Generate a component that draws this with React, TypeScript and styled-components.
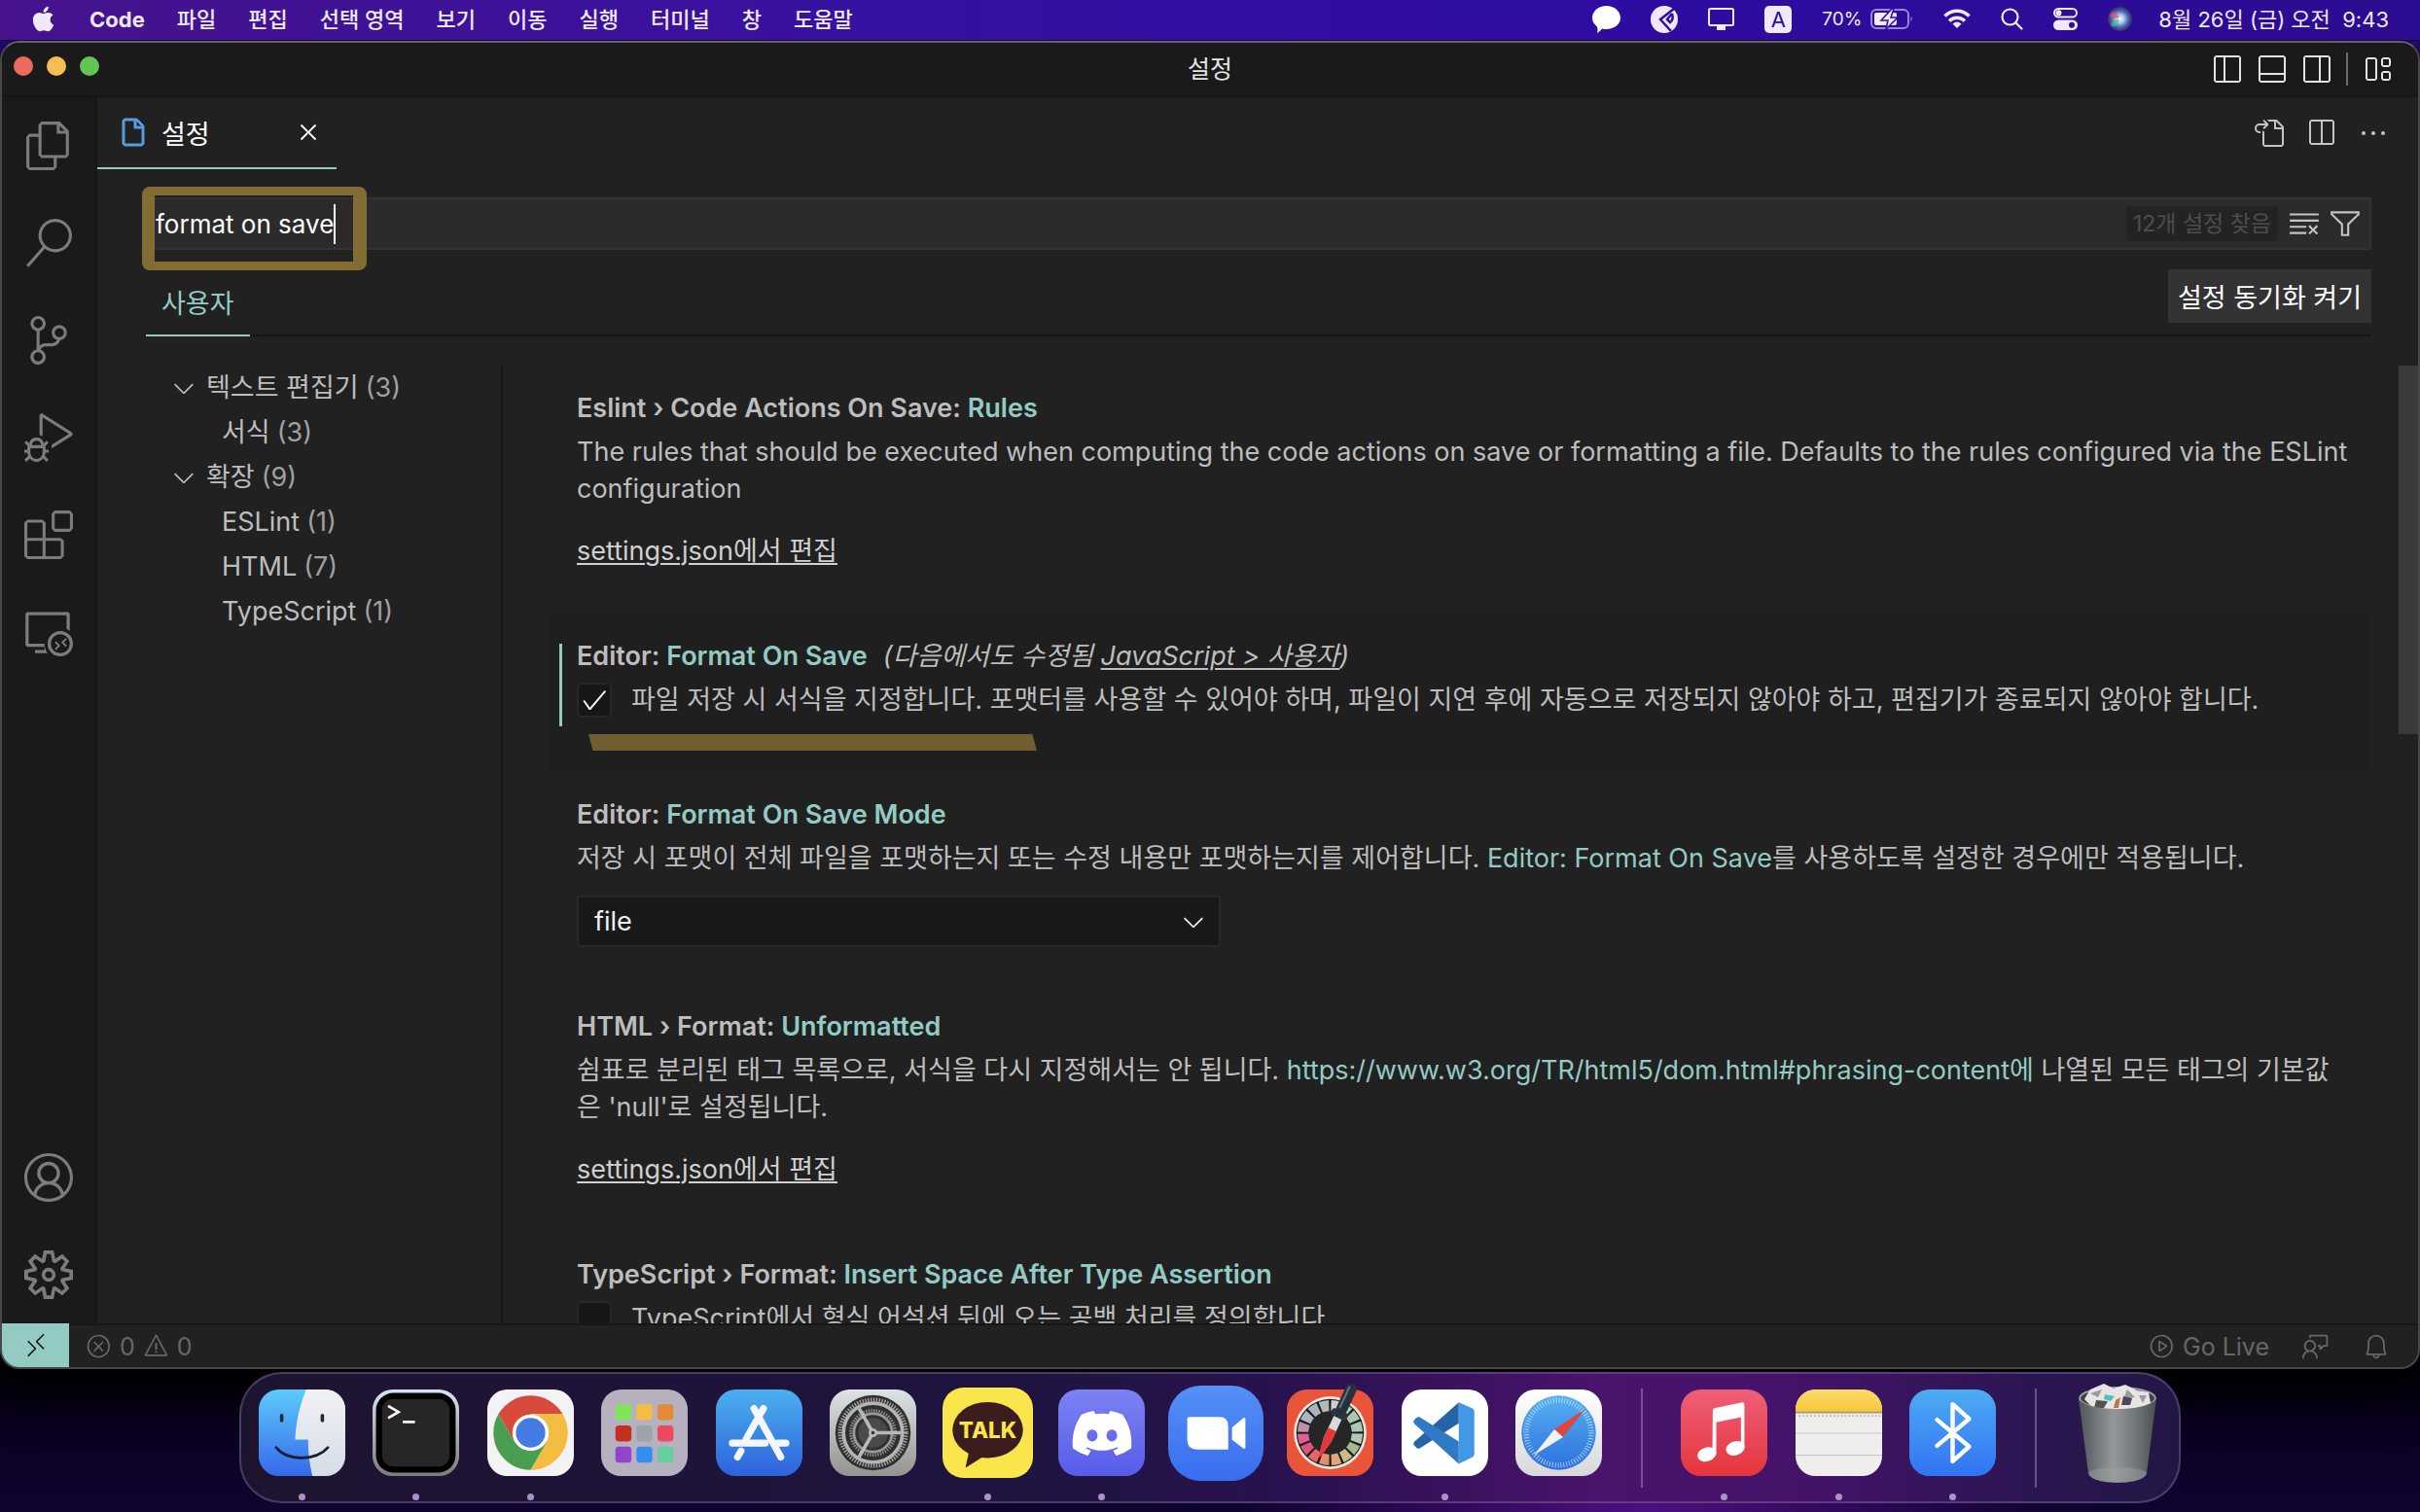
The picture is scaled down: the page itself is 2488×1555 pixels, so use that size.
import React, { useState } from 'react';
import styled, { createGlobalStyle, css } from 'styled-components';
import {
  VscFiles, VscSearch, VscSourceControl, VscDebugAlt, VscExtensions, VscRemoteExplorer, VscAccount,
  VscSettingsGear, VscGoToFile, VscSplitHorizontal, VscEllipsis, VscClearAll, VscFilter, VscError,
  VscWarning, VscFeedback, VscBell, VscRemote, VscLayoutSidebarLeftOff, VscLayoutPanelOff,
  VscLayoutSidebarRightOff, VscLayout, VscClose, VscFile, VscCheck, VscChevronDown, VscPlayCircle,
} from 'react-icons/vsc';
import { FaApple, FaDiscord } from 'react-icons/fa';

const accent = '#93cbc4';
const line = '#161616';
const font = `Inter, "Noto Sans CJK KR", sans-serif`;

const GlobalStyle = createGlobalStyle`
  * { box-sizing: border-box; }
  html, body { margin: 0; height: 100%; }
  body { background: #0e0328; font-family: ${font}; }
  button, input, select { font: inherit; color: inherit; margin: 0; }
  ul { list-style: none; margin: 0; padding: 0; }
  p, h1, h2 { margin: 0; font-weight: 400; }
  svg { display: block; flex: none; }
`;

const Desktop = styled.div`
  height: 100vh;
  min-height: 900px;
  display: flex;
  flex-direction: column;
  overflow: hidden;
  font-size: 27px;
  background:
    radial-gradient(ellipse 420px 190px at 68% 100%, #4d0f80 0%, rgba(77, 15, 128, 0) 100%),
    linear-gradient(to bottom, #2f0b96 0, #2f0b96 60px, #04000c 1400px, #0d0228 1500px, #0f0330 100%);
`;

/* ---------- menu bar ---------- */

const MenuBar = styled.header`
  position: relative;
  z-index: 1;
  flex: none;
  height: 42px;
  padding: 0 32px 2px 30px;
  display: flex;
  align-items: center;
  justify-content: space-between;
  color: #efe9fb;
  font-size: 22px;
  line-height: 40px;
  background: linear-gradient(to right, #46138d 0%, #3611a0 36%, #2f0ca2 65%, #2b0c90 100%);
  border-bottom: 1px solid #170a3a;
`;

const MenuGroup = styled.nav`
  display: flex;
  align-items: center;
  gap: 33px;
`;

const MenuButton = styled.button<{ $bold?: boolean }>`
  border: 0;
  padding: 0;
  background: none;
  font-weight: ${(p) => (p.$bold ? 700 : 500)};
  line-height: 38px;
  white-space: nowrap;
`;

const StatusGroup = styled.div`
  display: flex;
  align-items: center;
  gap: 31px;
`;

const Battery = styled.span`
  display: flex;
  align-items: center;
  gap: 9px;
  font-size: 19px;
`;

const InputSource = styled.span`
  width: 28px;
  height: 28px;
  border-radius: 5px;
  background: #efe9fb;
  color: #2f0ca2;
  font-size: 22px;
  line-height: 28px;
  text-align: center;
`;

const Clock = styled.time`
  margin-left: -4px;
  white-space: pre;
`;

/* ---------- window ---------- */

const Window = styled.main`
  flex: 1;
  min-height: 0;
  display: flex;
  flex-direction: column;
  overflow: hidden;
  border: 2px solid #474747;
  border-top-color: #646464;
  border-radius: 20px;
  background: #212121;
  color: #bdbdbd;
  box-shadow: 0 14px 50px 10px #000;
`;

const TitleBar = styled.div`
  flex: none;
  height: 56px;
  padding: 0 12px;
  display: grid;
  grid-template-columns: 1fr auto 1fr;
  align-items: center;
  background: #1a1a1a;
  border-bottom: 2px solid ${line};
`;

const TitleText = styled.h1`
  color: #e4e4e4;
  font-size: 25px;
  line-height: 40px;
`;

const Lights = styled.div`
  display: flex;
  gap: 14px;
  padding-bottom: 6px;
`;

const Light = styled.button<{ $color: string }>`
  width: 20px;
  height: 20px;
  padding: 0;
  border: 0;
  border-radius: 50%;
  background: ${(p) => p.$color};
`;

const TitleActions = styled.div`
  display: flex;
  justify-content: flex-end;
  align-items: center;
  gap: 14px;
  padding-right: 14px;
  color: #e4e4e4;
`;

const Divider = styled.span`
  width: 2px;
  height: 34px;
  background: #6a6a6a;
`;

const IconButton = styled.button`
  display: grid;
  place-items: center;
  border: 0;
  padding: 0;
  background: none;
`;

const Body = styled.div`
  flex: 1;
  min-height: 0;
  display: flex;
`;

const ActivityBar = styled.nav`
  flex: none;
  width: 98px;
  display: flex;
  flex-direction: column;
  background: #1a1a1a;
  border-right: 2px solid ${line};
  color: #7a7d7d;
`;

const ActivityButton = styled.button`
  height: 100px;
  display: grid;
  place-items: center;
  border: 0;
  padding: 0;
  background: none;
`;

const Spacer = styled.div`
  flex: 1;
`;

const Editor = styled.section`
  flex: 1;
  min-width: 0;
  display: flex;
  flex-direction: column;
`;

const TabStrip = styled.div`
  flex: none;
  height: 74px;
  display: flex;
  justify-content: space-between;
  padding-right: 30px;
`;

const Tab = styled.div`
  width: 246px;
  padding: 0 14px 0 20px;
  display: flex;
  align-items: center;
  border-bottom: 2px solid ${accent};
  color: #fff;
`;

const TabName = styled.span`
  flex: 1;
  padding-left: 14px;
`;

const TabActions = styled.div`
  display: flex;
  align-items: center;
  gap: 22px;
  color: #c4c4c4;
`;

const SearchHeader = styled.div`
  flex: none;
  padding: 29px 48px 0 50px;
`;

const SearchBox = styled.div`
  position: relative;
  height: 54px;
  padding: 0 8px;
  display: flex;
  align-items: center;
  background: #2b2b2b;
  border: 2px solid #333;
  color: #fff;
  font-size: 26px;
`;

const SearchInput = styled.input`
  field-sizing: content;
  border: 0;
  outline: 0;
  padding: 0;
  background: none;
  caret-color: transparent;
`;

const Caret = styled.span`
  width: 2px;
  height: 41px;
  background: #fff;
`;

const MarkerFrame = styled.span`
  position: absolute;
  left: -6px;
  top: -13px;
  width: 231px;
  height: 86px;
  border: 9px solid rgba(146, 122, 54, 0.85);
  border-left-width: 13px;
  border-right-width: 14px;
  border-radius: 8px;
  pointer-events: none;
`;

const CountBadge = styled.span`
  height: 36px;
  padding: 0 7px;
  border-radius: 4px;
  background: #232323;
  color: #4d4d4d;
  font-size: 23px;
  line-height: 36px;
`;

const SearchActions = styled.div`
  margin-left: 10px;
  display: flex;
  gap: 8px;
  color: #c4c4c4;
`;

const ScopeRow = styled.div`
  height: 89px;
  display: flex;
  align-items: stretch;
  justify-content: space-between;
  border-bottom: 2px solid ${line};
`;

const ScopeTab = styled.button`
  margin-bottom: -2px;
  padding: 20px 16px 0;
  border: 0;
  border-bottom: 2px solid ${accent};
  background: none;
  color: ${accent};
`;

const SyncButton = styled.button`
  align-self: flex-end;
  height: 55px;
  margin-bottom: 12px;
  padding: 0 10px;
  border: 0;
  background: #333;
  color: #fff;
`;

const SettingsBody = styled.div`
  flex: 1;
  min-height: 0;
  margin-top: 30px;
  padding-left: 50px;
  display: flex;
  overflow: hidden;
`;

const Toc = styled.nav`
  flex: none;
  width: 367px;
  border-right: 2px solid ${line};
`;

const TocItem = styled.li<{ $level: number }>`
  height: 46px;
  padding-left: ${(p) => (p.$level ? 78 : 23)}px;
  display: flex;
  align-items: center;
  gap: 7px;
  line-height: 46px;
  white-space: nowrap;
`;

const TocCount = styled.span`
  color: #a0a0a0;
`;

const Settings = styled.div`
  flex: 1;
  min-width: 0;
  height: 100%;
  padding: 0 0 0 48px;
  overflow: hidden;
`;

const Row = styled.article<{ $focused?: boolean }>`
  padding: 24px 21px 38px 28px;
  position: relative;
  ${(p) => p.$focused && css`background: #1f1f1f;`}
`;

const ModifiedBar = styled.span`
  position: absolute;
  left: 10px;
  top: 31px;
  width: 3px;
  height: 85px;
  background: ${accent};
`;

const RowTitle = styled.h2`
  font-size: 27px;
  font-weight: 600;
  line-height: 40px;
  margin-bottom: 6px;

  strong { color: ${accent}; font-weight: 600; }
`;

const Scope = styled.em`
  margin-left: 16px;
  font-weight: 400;
`;

const Description = styled.p`
  line-height: 38px;
`;

const TextLink = styled.a<{ $plain?: boolean }>`
  color: ${(p) => (p.$plain ? accent : 'inherit')};
  text-decoration: ${(p) => (p.$plain ? 'none' : 'underline')};
  text-decoration-thickness: 2px;
  text-underline-offset: 3px;
`;

const LinkRow = styled.p`
  padding: 26px 0 7px;
  line-height: 38px;
  color: #d0d0d0;
`;

const CheckRow = styled.label`
  display: flex;
  align-items: center;
  gap: 20px;
  height: 38px;
  margin-bottom: 17px;
  line-height: 38px;
  white-space: nowrap;
`;

const CheckHolder = styled.span`
  position: relative;
  width: 36px;
  height: 36px;
  color: #fff;

  svg { position: absolute; left: 3px; top: 3px; pointer-events: none; }
`;

const CheckBox = styled.input`
  appearance: none;
  display: block;
  width: 36px;
  height: 36px;
  border: 2px solid #272727;
  border-radius: 6px;
  background: #171717;
`;

const MarkerLine = styled.span`
  position: absolute;
  left: 40px;
  top: 124px;
  width: 461px;
  height: 17px;
  background: #6e5e31;
  clip-path: polygon(0 0, 99% 0, 100% 100%, 1% 100%);
`;

const SelectHolder = styled.div`
  position: relative;
  width: 662px;
  margin-top: 19px;
  color: #f0f0f0;

  svg { position: absolute; right: 12px; top: 11px; pointer-events: none; }
`;

const Select = styled.select`
  appearance: none;
  display: block;
  width: 100%;
  height: 53px;
  padding: 0 16px;
  border: 2px solid #272727;
  border-radius: 0;
  background: #191919;
`;

const ScrollTrack = styled.div`
  flex: none;
  width: 20px;
  margin-left: 29px;
`;

const ScrollThumb = styled.div`
  height: 379px;
  background: #3a3b3a;
`;

const StatusBar = styled.footer`
  flex: none;
  height: 45px;
  padding-right: 29px;
  display: flex;
  align-items: center;
  border-top: 2px solid ${line};
  color: #676767;
  font-size: 25px;
`;

const RemoteButton = styled.button`
  align-self: stretch;
  width: 69px;
  margin-top: -2px;
  display: grid;
  place-items: center;
  border: 0;
  padding: 0;
  background: ${accent};
  color: #111;
`;

const StatusItem = styled.button<{ $left: number }>`
  display: flex;
  align-items: center;
  gap: 8px;
  margin-left: ${(p) => p.$left}px;
  padding: 0;
  border: 0;
  background: none;
`;

/* ---------- dock ---------- */

const Dock = styled.nav`
  flex: none;
  align-self: center;
  width: min(1996px, 100%);
  height: 135px;
  margin: 3px 0 9px;
  padding: 0 18px;
  display: flex;
  align-items: center;
  justify-content: space-between;
  border: 2px solid rgba(140, 120, 170, 0.4);
  border-radius: 44px;
  background: linear-gradient(to right, #1e132f 0%, #1f1440 40%, #2a1250 55%, #4a136c 70%, #45136a 80%, #2c1652 92%, #231645 100%);
`;

const DockItem = styled.button<{ $running?: boolean }>`
  position: relative;
  width: 89px;
  height: 89px;
  padding: 0;
  border: 0;
  margin-bottom: 10px;
  display: flex;
  align-items: center;
  justify-content: center;
  background: none;

  &::after {
    content: '';
    display: ${(p) => (p.$running ? 'block' : 'none')};
    position: absolute;
    left: 41px;
    bottom: -25px;
    width: 7px;
    height: 7px;
    border-radius: 50%;
    background: #ab92ca;
  }
`;

const DockDivider = styled.span`
  width: 2px;
  height: 102px;
  margin: 0 11px;
  background: rgba(190, 150, 220, 0.45);
`;

/* ---------- drawings ---------- */

const Tile = ({ fill }: { fill: string }) => <rect width="100" height="100" rx="23" fill={fill} />;

const Gradient = ({ id, from, to }: { id: string; from: string; to: string }) => (
  <linearGradient id={id} x1="0" y1="0" x2="0" y2="1">
    <stop offset="0" stopColor={from} />
    <stop offset="1" stopColor={to} />
  </linearGradient>
);

const Art = ({ size = 89, children }: { size?: number; children: React.ReactNode }) => (
  <svg width={size} height={size} viewBox="0 0 100 100" overflow="visible" fill="none">{children}</svg>
);

const Finder = () => (
  <Art>
    <defs>
      <Gradient id="fi1" from="#5ecbfa" to="#3568ec" />
      <Gradient id="fi2" from="#f1f1f5" to="#d4dce6" />
      <clipPath id="fic"><rect width="100" height="100" rx="23" /></clipPath>
    </defs>
    <g clipPath="url(#fic)">
      <rect width="100" height="100" fill="url(#fi1)" />
      <path d="M55 0C48 16 43 36 42 58H57C57 74 59 88 62 100H100V0Z" fill="url(#fi2)" />
    </g>
    <path d="M26.500 30V36M73.500 30V36" stroke="#1d2a3a" strokeWidth="4" strokeLinecap="round" />
    <path d="M20 67C33 83 66 83 80 67" stroke="#14202e" strokeWidth="3" strokeLinecap="round" />
  </Art>
);

const Terminal = () => (
  <Art>
    <defs><Gradient id="te" from="#d5e4ee" to="#7d7b7b" /></defs>
    <Tile fill="url(#te)" />
    <rect x="4" y="4" width="92" height="92" rx="20" fill="#000" />
    <rect x="11" y="11" width="78" height="78" rx="13" fill="#262626" />
    <path d="M18 19L30 26L18 33M35 37.500H49" stroke="#fff" strokeWidth="3" />
  </Art>
);

const Chrome = () => (
  <Art>
    <Tile fill="#f3f3f5" />
    <path d="M12.800 28.500A43 43 0 0 1 87.200 28.500H50L31.400 60.750Z" fill="#d84b3c" />
    <path d="M87.200 28.500A43 43 0 0 1 50 93L68.600 60.750L50 28.500Z" fill="#f3bd42" />
    <path d="M12.800 28.500A43 43 0 0 0 50 93L68.600 60.750H31.400Z" fill="#4a9e51" />
    <circle cx="50" cy="50" r="21" fill="#fff" />
    <circle cx="50" cy="50" r="17" fill="#447ce4" />
  </Art>
);

const padColors = ['#80e35c', '#f3bd45', '#e58a38', '#c4301f', '#9da3a6', '#e94a60', '#9543cb', '#3190f2', '#69cda2'];
const Launchpad = () => (
  <Art>
    <Tile fill="#b6b1bf" />
    {padColors.map((color, i) => (
      <rect key={color} x={16.5 + (i % 3) * 24.3} y={17 + Math.floor(i / 3) * 24.5} width="18.500" height="18.500" rx="4" fill={color} />
    ))}
  </Art>
);

const AppStore = () => (
  <Art>
    <defs><Gradient id="as" from="#4ab0ee" to="#2e62dc" /></defs>
    <Tile fill="url(#as)" />
    <g stroke="#f4f8fd" strokeWidth="8" strokeLinecap="round">
      <path d="M19 62H57M71 62H81M44 22L75 78M29 71L25 78" />
      <path d="M55 22L35 57" />
    </g>
  </Art>
);

const Preferences = () => (
  <Art>
    <defs><Gradient id="pr" from="#dde3e6" to="#93938f" /></defs>
    <Tile fill="url(#pr)" />
    <circle cx="50" cy="50" r="43.500" fill="#303030" />
    <circle cx="50" cy="50" r="38" stroke="#a2a2a2" strokeWidth="5" strokeDasharray="1.600 1.600" />
    <circle cx="50" cy="50" r="34" stroke="#b4b6b6" strokeWidth="4" />
    <circle cx="50" cy="50" r="25.500" stroke="#8b8b8b" strokeWidth="4" strokeDasharray="1.600 1.400" />
    <circle cx="50" cy="50" r="22" stroke="#9b9b9b" strokeWidth="3" />
    <circle cx="50" cy="50" r="17" fill="#4a4a4a" />
    <path d="M50 50H82M50 50L34 22M50 50L34 78" stroke="#b8baba" strokeWidth="4" />
    <circle cx="50" cy="50" r="5" fill="#b8baba" />
    <circle cx="50" cy="50" r="2" fill="#303030" />
  </Art>
);

const TalkText = styled.text`
  font: 800 24px ${font};
  fill: #fae54c;
`;

const Talk = () => (
  <Art size={93}>
    <Tile fill="#fae54c" />
    <ellipse cx="50" cy="47" rx="39" ry="31" fill="#3a1d1c" />
    <path d="M30 70L26 88L48 74Z" fill="#3a1d1c" stroke="#3a1d1c" strokeWidth="1" />
    <TalkText x="50" y="56" textAnchor="middle">TALK</TalkText>
  </Art>
);

const DiscordTile = styled.span`
  width: 89px;
  height: 89px;
  display: grid;
  place-items: center;
  border-radius: 20px;
  background: linear-gradient(#7c82f2, #575cea);
  color: #fff;
`;

const Discord = () => (
  <DiscordTile><FaDiscord size={66} /></DiscordTile>
);

const Zoom = () => (
  <Art size={98}>
    <defs><Gradient id="zo" from="#5490f6" to="#386df0" /></defs>
    <rect width="100" height="100" rx="34" fill="url(#zo)" />
    <path d="M22 33H54Q63 33 63 43V67H30Q20 67 20 57V36Q20 33 22 33Z" fill="#fff" />
    <path d="M67 44L79 34Q81 33 81 35V65Q81 67 79 66L67 57Z" fill="#fff" />
  </Art>
);

const dial = ['#cfd0c8', '#c0cdbd', '#adc6b4', '#a9c9b4', '#b2c8b0', '#a7b98d', '#c9b98c', '#e0a878', '#e58d70', '#e3666a', '#e0527c', '#df5f98', '#c58cab', '#aeb4c4', '#aab4bd', '#b4bab8'];
const Picker = () => (
  <Art>
    <Tile fill="#ea5539" />
    <circle cx="50" cy="50" r="42" fill="#e9e6e2" />
    <circle cx="50" cy="50" r="39" fill="#1c1c1c" />
    {dial.map((color, i) => (
      <path key={i} d="M44 12.800A37.500 37.500 0 0 1 56 12.800L53.800 25.500H46.200Z" fill={color} transform={`rotate(${i * 22.5 + 11} 50 50)`} />
    ))}
    <circle cx="50" cy="50" r="25" fill="#262626" />
    <g transform="rotate(25 60 30)">
      <path d="M55 32H65V60L61 82H59L55 60Z" fill="#d9d9d9" />
      <path d="M55 48H65V62L61 83H59L55 62Z" fill="#e2383a" />
      <rect x="50" y="24" width="20" height="9" rx="4" fill="#2b3542" />
      <rect x="53.500" y="-10" width="13" height="38" rx="6" fill="#27303d" />
      <rect x="56" y="-6" width="2.500" height="28" rx="1" fill="#5f6c7d" />
    </g>
  </Art>
);

const Code = () => (
  <Art>
    <Tile fill="#fff" />
    <path d="M66 15V39L21 68Q19 69 17 67L14 64Q13 62 15 60Z" fill="#2764a7" />
    <path d="M66 86V60L21 32Q19 31 17 33L14 36Q13 38 15 40Z" fill="#2f7ac6" />
    <path d="M66 15L82 22Q84 23 84 26V74Q84 77 82 78L66 86Z" fill="#4398e6" />
  </Art>
);

const Safari = () => (
  <Art>
    <defs>
      <Gradient id="sa1" from="#fff" to="#d8d8da" />
      <Gradient id="sa2" from="#55b2f1" to="#2d6fdd" />
    </defs>
    <Tile fill="url(#sa1)" />
    <circle cx="50" cy="50" r="43" fill="url(#sa2)" />
    <circle cx="50" cy="50" r="37.500" stroke="#d5e8fa" strokeWidth="6" strokeDasharray="0.800 2.472" />
    <path d="M80 23L55 55L45 46Z" fill="#e0453f" />
    <path d="M21 76L45 46L55 55Z" fill="#f3f3f3" />
  </Art>
);

const Music = () => (
  <Art>
    <defs><Gradient id="mu" from="#ee5f78" to="#e6353c" /></defs>
    <Tile fill="url(#mu)" />
    <path d="M37 24Q37 22 39 21.500L71 15Q73.500 15 73.500 17V68H69.500V32L41 38V75H36.500Z" fill="#fff" />
    <ellipse cx="30" cy="75" rx="11" ry="8" transform="rotate(-18 30 75)" fill="#fff" />
    <ellipse cx="63" cy="68" rx="11" ry="8" transform="rotate(-18 63 68)" fill="#fff" />
  </Art>
);

const Notes = () => (
  <Art>
    <defs>
      <Gradient id="no" from="#fbdc6a" to="#f6c53a" />
      <clipPath id="noc"><rect width="100" height="100" rx="23" /></clipPath>
    </defs>
    <g clipPath="url(#noc)">
      <rect width="100" height="100" fill="#efeeec" />
      <rect width="100" height="26" fill="url(#no)" />
      <rect y="25.500" width="100" height="2" fill="#a7996e" />
      <path d="M4 30.500H98" stroke="#b5b4b0" strokeWidth="2" strokeDasharray="2 2.400" />
      <path d="M0 50.500H100M0 76H100" stroke="#c9c8c5" strokeWidth="1.200" />
    </g>
  </Art>
);

const Bluetooth = () => (
  <Art>
    <defs><Gradient id="bt" from="#4dacf2" to="#3173f3" /></defs>
    <Tile fill="url(#bt)" />
    <path d="M32 35L69 66L50 83V17L69 34L32 65" stroke="#fff" strokeWidth="5" strokeLinecap="round" strokeLinejoin="round" />
  </Art>
);

const Trash = () => (
  <svg width="80" height="102" viewBox="0 0 80 102" fill="none">
    <defs>
      <linearGradient id="tr" x1="0" y1="0" x2="1" y2="0">
        <stop offset="0" stopColor="#4f5558" />
        <stop offset="0.450" stopColor="#94989a" />
        <stop offset="0.750" stopColor="#6f7477" />
        <stop offset="1" stopColor="#4a4f52" />
      </linearGradient>
    </defs>
    <ellipse cx="40" cy="15" rx="39" ry="11" fill="#3d4144" stroke="#9b9fa1" strokeWidth="2" />
    <path d="M6 16L12 6L26 0L36 5L48 1L60 7L72 9L74 20L60 26H16Z" fill="#e6e5e3" />
    <path d="M12 10L24 6L20 14ZM50 6L58 14L46 16ZM62 12L70 12L66 20Z" fill="#9b9a9a" />
    <path d="M27 11L37 13L33 18L26 16Z" fill="#4bc3b9" />
    <path d="M46 13L55 15L53 22H44Z" fill="#50445f" />
    <path d="M18 17L30 18L26 25H16Z" fill="#57504c" />
    <path d="M38 17L43 14L41 25H36Z" fill="#bd7646" />
    <path d="M0 15C2 21 18 26 40 26S78 21 80 15L70 92C68 105 12 105 10 92Z" fill="url(#tr)" />
    <path d="M10 92C14 84 66 84 70 92C68 105 12 105 10 92Z" fill="#9aa09f" opacity="0.500" />
  </svg>
);

const dockApps = [
  { name: 'Finder', Icon: Finder, running: true },
  { name: 'Terminal', Icon: Terminal, running: true },
  { name: 'Chrome', Icon: Chrome, running: true },
  { name: 'Launchpad', Icon: Launchpad },
  { name: 'App Store', Icon: AppStore },
  { name: 'System Preferences', Icon: Preferences },
  { name: 'KakaoTalk', Icon: Talk, running: true },
  { name: 'Discord', Icon: Discord, running: true },
  { name: 'Zoom', Icon: Zoom },
  { name: 'Digital Color Meter', Icon: Picker },
  { name: 'Visual Studio Code', Icon: Code, running: true },
  { name: 'Safari', Icon: Safari },
];

const dockRecent = [
  { name: 'Music', Icon: Music, running: true },
  { name: 'Notes', Icon: Notes, running: true },
  { name: 'Bluetooth', Icon: Bluetooth, running: true },
];

const StatusIcons = () => (
  <>
    <svg width="29" height="28" viewBox="0 0 29 28" fill="#fff"><path d="M14.500 0C22.500 0 29 5.500 29 12.300S22.500 24 14.500 24Q12 24 10 23.500Q8 26.500 5 28Q6 24.500 5 21.500C2 19.300 0 16 0 12.300C0 5.500 6.500 0 14.500 0Z" /></svg>
    <svg width="28" height="28" viewBox="0 0 28 28"><circle cx="14" cy="14" r="14" fill="#efe9fb" /><path d="M24 3L10 14L21 26M22 8L17 14L20 17Q24 14 22 8" fill="none" stroke="#2f0ca2" strokeWidth="2.500" /></svg>
    <svg width="27" height="24" viewBox="0 0 27 24" fill="none" stroke="#efe9fb" strokeWidth="2"><rect x="1" y="1" width="25" height="17" rx="1.500" /><path d="M10 20H17V22H10Z" fill="#efe9fb" /></svg>
    <InputSource>A</InputSource>
    <Battery>
      70%
      <svg width="44" height="21" viewBox="0 0 44 21" fill="none">
        <rect x="1" y="1" width="38" height="19" rx="5" stroke="#9a86d0" strokeWidth="2" />
        <path d="M41.500 7.500Q44 10.500 41.500 13.500Z" fill="#9a86d0" />
        <rect x="4" y="4" width="23" height="13" rx="2" fill="#efe9fb" />
        <path d="M22 0L11 12H18L16 21L28 9H21L24 0Z" fill="#efe9fb" stroke="#2f0ca2" strokeWidth="1.500" />
      </svg>
    </Battery>
    <svg width="28" height="21" viewBox="0 0 28 21" fill="none" stroke="#efe9fb" strokeWidth="3.500"><path d="M1.500 7.500C8.500 0.500 19.500 0.500 26.500 7.500M6 12.500C10.500 8 17.500 8 22 12.500" /><path d="M14 20L9.500 15.500Q14 11.500 18.500 15.500Z" fill="#efe9fb" stroke="none" /></svg>
    <svg width="23" height="23" viewBox="0 0 23 23" fill="none" stroke="#efe9fb" strokeWidth="2.200" strokeLinecap="round"><circle cx="9.500" cy="9.500" r="8" /><path d="M15.500 15.500L21.500 21.500" /></svg>
    <svg width="25" height="23" viewBox="0 0 25 23" fill="none"><rect x="1" y="1" width="23" height="8.500" rx="4.250" stroke="#efe9fb" strokeWidth="2" /><circle cx="5.500" cy="5.250" r="3" fill="#efe9fb" /><rect y="12.500" width="25" height="10.500" rx="5.250" fill="#efe9fb" /><circle cx="19" cy="17.750" r="3" fill="#2f0ca2" /></svg>
    <svg width="25" height="25" viewBox="0 0 25 25">
      <defs>
        <radialGradient id="si">
          <stop offset="0" stopColor="#fff" />
          <stop offset="0.350" stopColor="#a7c6e6" />
          <stop offset="0.700" stopColor="#4a5fb0" />
          <stop offset="1" stopColor="#35305a" />
        </radialGradient>
      </defs>
      <circle cx="12.500" cy="12.500" r="12.500" fill="url(#si)" />
      <path d="M12 11C6 2 3 5 2 10C5 12 9 12 12 11Z" fill="#e0507a" opacity="0.700" />
      <path d="M12 13C8 22 5 22 3 18C5 14 9 13 12 13Z" fill="#37c3a0" opacity="0.700" />
    </svg>
  </>
);

/* ---------- data ---------- */

const menus = ['파일', '편집', '선택 영역', '보기', '이동', '실행', '터미널', '창', '도움말'];

const toc = [
  { label: '텍스트 편집기', count: 3, level: 0 },
  { label: '서식', count: 3, level: 1 },
  { label: '확장', count: 9, level: 0 },
  { label: 'ESLint', count: 1, level: 1 },
  { label: 'HTML', count: 7, level: 1 },
  { label: 'TypeScript', count: 1, level: 1 },
];

const topActivities = [
  { name: '탐색기', Icon: VscFiles },
  { name: '검색', Icon: VscSearch },
  { name: '소스 제어', Icon: VscSourceControl },
  { name: '실행 및 디버그', Icon: VscDebugAlt },
  { name: '확장', Icon: VscExtensions },
  { name: '원격 탐색기', Icon: VscRemoteExplorer },
];

const bottomActivities = [
  { name: '계정', Icon: VscAccount },
  { name: '관리', Icon: VscSettingsGear },
];

const layoutButtons = [
  { name: '기본 사이드바', Icon: VscLayoutSidebarLeftOff },
  { name: '패널', Icon: VscLayoutPanelOff },
  { name: '보조 사이드바', Icon: VscLayoutSidebarRightOff },
];

const Title = ({ group, name, children }: { group: string; name: string; children?: React.ReactNode }) => (
  <RowTitle>{group}: <strong>{name}</strong>{children}</RowTitle>
);

const EditLink = () => (
  <LinkRow><TextLink href="#settings-json">settings.json에서 편집</TextLink></LinkRow>
);

export default function App() {
  const [query, setQuery] = useState('format on save');
  const [formatOnSave, setFormatOnSave] = useState(true);

  return (
    <Desktop>
      <GlobalStyle />
      <MenuBar>
        <MenuGroup>
          <FaApple size={29} />
          <MenuButton $bold>Code</MenuButton>
          {menus.map((m) => <MenuButton key={m}>{m}</MenuButton>)}
        </MenuGroup>
        <StatusGroup>
          <StatusIcons />
          <Clock>8월 26일 (금) 오전  9:43</Clock>
        </StatusGroup>
      </MenuBar>

      <Window>
        <TitleBar>
          <Lights>
            <Light $color="#ec6a5e" aria-label="닫기" />
            <Light $color="#f4bf50" aria-label="최소화" />
            <Light $color="#61c455" aria-label="확대" />
          </Lights>
          <TitleText>설정</TitleText>
          <TitleActions>
            {layoutButtons.map(({ name, Icon }) => (
              <IconButton key={name} aria-label={name}><Icon size={32} /></IconButton>
            ))}
            <Divider />
            <IconButton aria-label="레이아웃 사용자 지정"><VscLayout size={32} /></IconButton>
          </TitleActions>
        </TitleBar>

        <Body>
          <ActivityBar>
            {topActivities.map(({ name, Icon }) => (
              <ActivityButton key={name} aria-label={name}><Icon size={50} /></ActivityButton>
            ))}
            <Spacer />
            {bottomActivities.map(({ name, Icon }) => (
              <ActivityButton key={name} aria-label={name}><Icon size={50} /></ActivityButton>
            ))}
          </ActivityBar>

          <Editor>
            <TabStrip>
              <Tab>
                <VscFile size={32} color="#5a9be0" stroke="#5a9be0" strokeWidth={0.5} />
                <TabName>설정</TabName>
                <IconButton aria-label="탭 닫기"><VscClose size={30} /></IconButton>
              </Tab>
              <TabActions>
                <IconButton aria-label="설정 열기(JSON)"><VscGoToFile size={32} /></IconButton>
                <IconButton aria-label="편집기 분할"><VscSplitHorizontal size={32} /></IconButton>
                <IconButton aria-label="기타 작업"><VscEllipsis size={32} /></IconButton>
              </TabActions>
            </TabStrip>

            <SearchHeader>
              <SearchBox>
                <SearchInput aria-label="설정 검색" value={query} onChange={(e) => setQuery(e.target.value)} />
                <Caret />
                <Spacer />
                <CountBadge>12개 설정 찾음</CountBadge>
                <SearchActions>
                  <IconButton aria-label="검색 지우기"><VscClearAll size={34} /></IconButton>
                  <IconButton aria-label="필터"><VscFilter size={34} /></IconButton>
                </SearchActions>
                <MarkerFrame />
              </SearchBox>
              <ScopeRow>
                <ScopeTab>사용자</ScopeTab>
                <SyncButton>설정 동기화 켜기</SyncButton>
              </ScopeRow>
            </SearchHeader>

            <SettingsBody>
              <Toc>
                <ul>
                  {toc.map((t) => (
                    <TocItem key={t.label} $level={t.level}>
                      {t.level === 0 && <VscChevronDown size={32} />}
                      <span>{t.label}</span>
                      <TocCount>({t.count})</TocCount>
                    </TocItem>
                  ))}
                </ul>
              </Toc>

              <Settings>
                <Row>
                  <Title group="Eslint › Code Actions On Save" name="Rules" />
                  <Description>
                    The rules that should be executed when computing the code actions on save or formatting a file. Defaults to the rules configured via the ESLint configuration
                  </Description>
                  <EditLink />
                </Row>

                <Row $focused>
                  <ModifiedBar />
                  <Title group="Editor" name="Format On Save">
                    <Scope>(다음에서도 수정됨 <TextLink href="#javascript">JavaScript &gt; 사용자</TextLink>)</Scope>
                  </Title>
                  <CheckRow>
                    <CheckHolder>
                      <CheckBox type="checkbox" checked={formatOnSave} onChange={(e) => setFormatOnSave(e.target.checked)} />
                      {formatOnSave && <VscCheck size={30} />}
                    </CheckHolder>
                    파일 저장 시 서식을 지정합니다. 포맷터를 사용할 수 있어야 하며, 파일이 지연 후에 자동으로 저장되지 않아야 하고, 편집기가 종료되지 않아야 합니다.
                  </CheckRow>
                  <MarkerLine />
                </Row>

                <Row>
                  <Title group="Editor" name="Format On Save Mode" />
                  <Description>
                    저장 시 포맷이 전체 파일을 포맷하는지 또는 수정 내용만 포맷하는지를 제어합니다. <TextLink $plain href="#format-on-save">Editor: Format On Save</TextLink>를 사용하도록 설정한 경우에만 적용됩니다.
                  </Description>
                  <SelectHolder>
                    <Select aria-label="Format On Save Mode" defaultValue="file">
                      <option value="file">file</option>
                    </Select>
                    <VscChevronDown size={32} />
                  </SelectHolder>
                </Row>

                <Row>
                  <Title group="HTML › Format" name="Unformatted" />
                  <Description>
                    쉼표로 분리된 태그 목록으로, 서식을 다시 지정해서는 안 됩니다. <TextLink $plain href="#phrasing-content">https://www.w3.org/TR/html5/dom.html#phrasing-content에</TextLink> 나열된 모든 태그의 기본값은 'null'로 설정됩니다.
                  </Description>
                  <EditLink />
                </Row>

                <Row>
                  <Title group="TypeScript › Format" name="Insert Space After Type Assertion" />
                  <CheckRow>
                    <CheckHolder><CheckBox type="checkbox" /></CheckHolder>
                    TypeScript에서 형식 어설션 뒤에 오는 공백 처리를 정의합니다.
                  </CheckRow>
                </Row>
              </Settings>

              <ScrollTrack><ScrollThumb /></ScrollTrack>
            </SettingsBody>
          </Editor>
        </Body>

        <StatusBar>
          <RemoteButton aria-label="원격 창 열기"><VscRemote size={28} /></RemoteButton>
          <StatusItem $left={17}>
            <VscError size={27} />0<VscWarning size={27} />0
          </StatusItem>
          <Spacer />
          <StatusItem $left={0}><VscPlayCircle size={27} />Go Live</StatusItem>
          <StatusItem $left={34} aria-label="피드백"><VscFeedback size={28} /></StatusItem>
          <StatusItem $left={34} aria-label="알림"><VscBell size={28} /></StatusItem>
        </StatusBar>
      </Window>

      <Dock>
        {dockApps.map(({ name, Icon, running }) => (
          <DockItem key={name} aria-label={name} $running={running}><Icon /></DockItem>
        ))}
        <DockDivider />
        {dockRecent.map(({ name, Icon, running }) => (
          <DockItem key={name} aria-label={name} $running={running}><Icon /></DockItem>
        ))}
        <DockDivider />
        <DockItem aria-label="휴지통"><Trash /></DockItem>
      </Dock>
    </Desktop>
  );
}
